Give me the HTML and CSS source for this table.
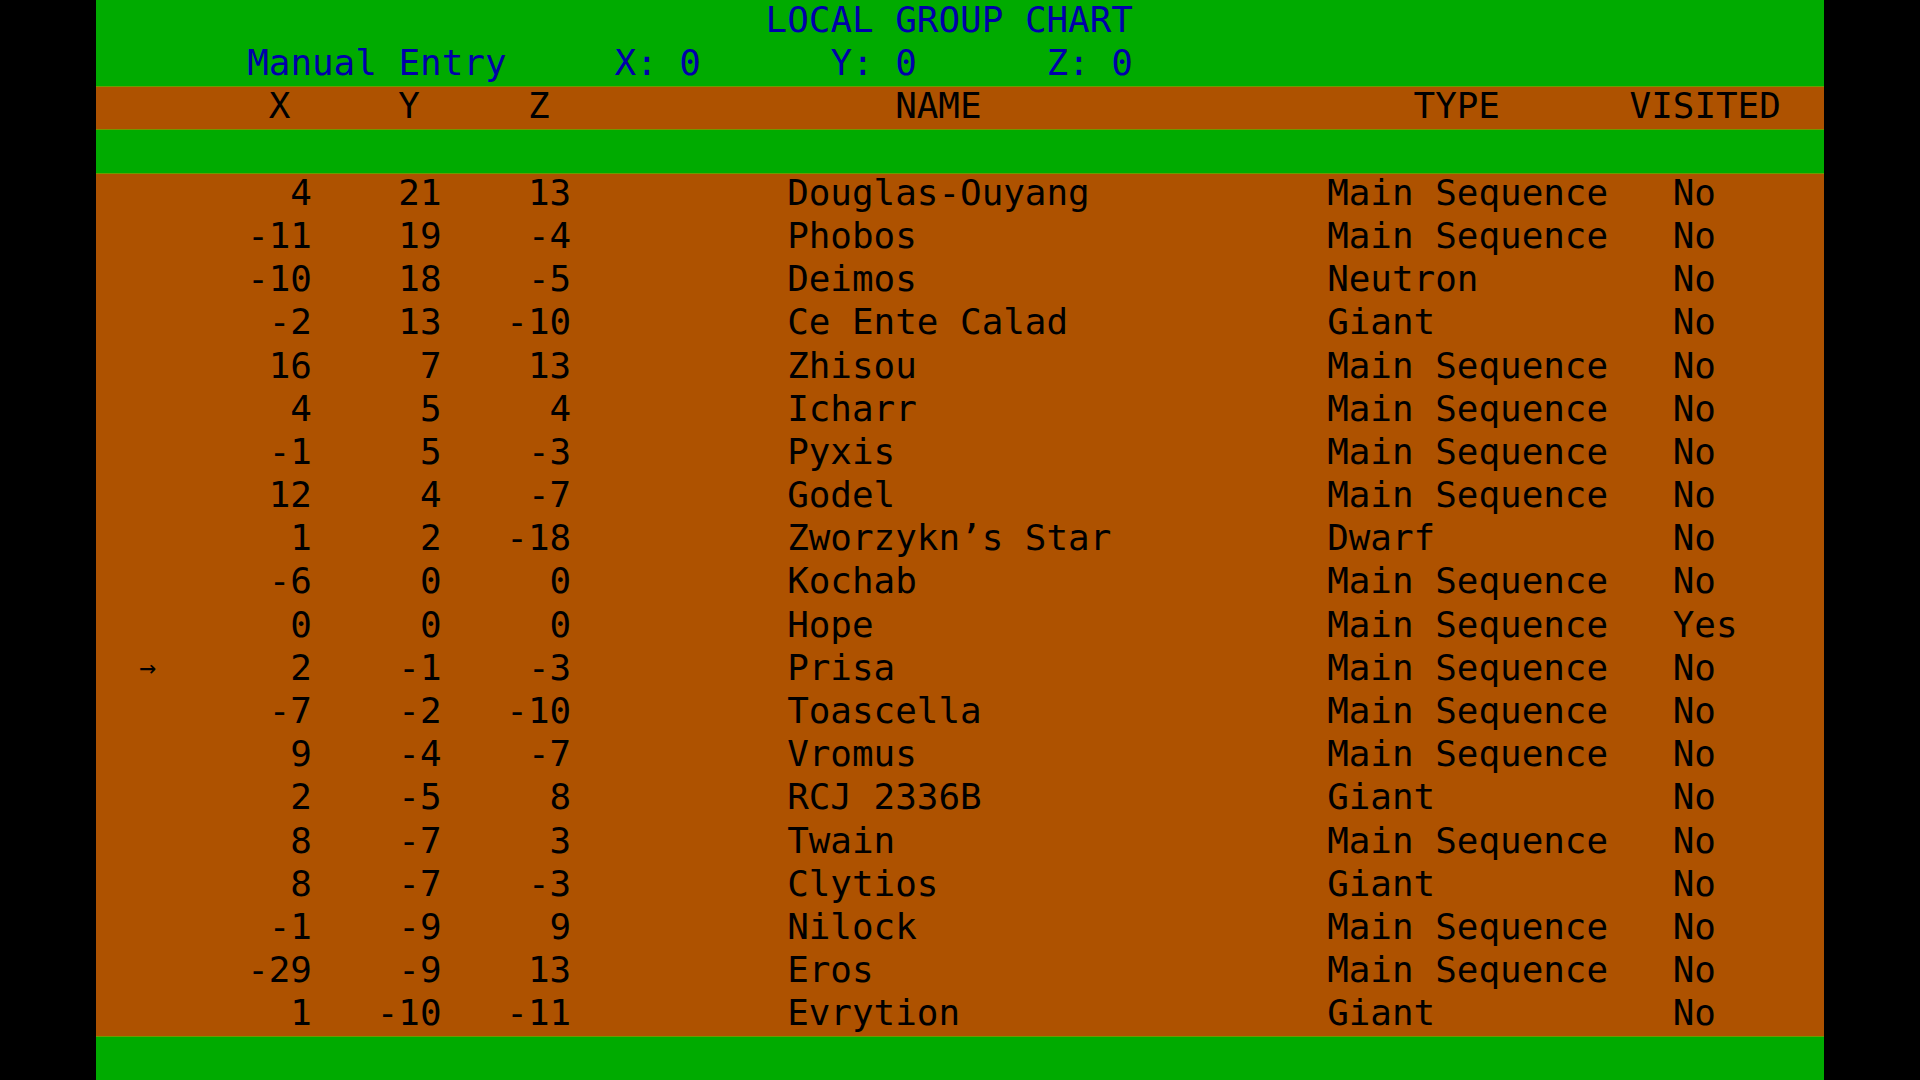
FILE: index.html
```html
<!DOCTYPE html>
<html lang="en">
<head>
<meta charset="utf-8">
<title>Local Group Chart</title>
<link rel="stylesheet" href="styles.css">
</head>
<body>
<main class="screen">
  <header class="top">
    <div class="line title">LOCAL GROUP CHART</div>
    <div class="line coords">
      <span class="pad7"></span>
      <span>Manual Entry</span>
      <span>X: 0</span>
      <span>Y: 0</span>
      <span>Z: 0</span>
    </div>
  </header>

  <div class="line grid heads">
    <span></span><span></span>
    <span class="num hnum">X</span>
    <span class="num hnum">Y</span>
    <span class="num hnum">Z</span>
    <span></span>
    <span class="hname">NAME</span>
    <span class="htype">TYPE</span>
    <span class="hvis">VISITED</span>
  </div>

  <div class="line spacer"></div>

  <ul class="list">
    <li class="line grid"><span></span><span class="mark"></span><span class="num">4</span><span class="num">21</span><span class="num">13</span><span></span><span>Douglas-Ouyang</span><span>Main Sequence</span><span>No</span></li>
    <li class="line grid"><span></span><span class="mark"></span><span class="num">-11</span><span class="num">19</span><span class="num">-4</span><span></span><span>Phobos</span><span>Main Sequence</span><span>No</span></li>
    <li class="line grid"><span></span><span class="mark"></span><span class="num">-10</span><span class="num">18</span><span class="num">-5</span><span></span><span>Deimos</span><span>Neutron</span><span>No</span></li>
    <li class="line grid"><span></span><span class="mark"></span><span class="num">-2</span><span class="num">13</span><span class="num">-10</span><span></span><span>Ce Ente Calad</span><span>Giant</span><span>No</span></li>
    <li class="line grid"><span></span><span class="mark"></span><span class="num">16</span><span class="num">7</span><span class="num">13</span><span></span><span>Zhisou</span><span>Main Sequence</span><span>No</span></li>
    <li class="line grid"><span></span><span class="mark"></span><span class="num">4</span><span class="num">5</span><span class="num">4</span><span></span><span>Icharr</span><span>Main Sequence</span><span>No</span></li>
    <li class="line grid"><span></span><span class="mark"></span><span class="num">-1</span><span class="num">5</span><span class="num">-3</span><span></span><span>Pyxis</span><span>Main Sequence</span><span>No</span></li>
    <li class="line grid"><span></span><span class="mark"></span><span class="num">12</span><span class="num">4</span><span class="num">-7</span><span></span><span>Godel</span><span>Main Sequence</span><span>No</span></li>
    <li class="line grid"><span></span><span class="mark"></span><span class="num">1</span><span class="num">2</span><span class="num">-18</span><span></span><span>Zworzykn’s Star</span><span>Dwarf</span><span>No</span></li>
    <li class="line grid"><span></span><span class="mark"></span><span class="num">-6</span><span class="num">0</span><span class="num">0</span><span></span><span>Kochab</span><span>Main Sequence</span><span>No</span></li>
    <li class="line grid"><span></span><span class="mark"></span><span class="num">0</span><span class="num">0</span><span class="num">0</span><span></span><span>Hope</span><span>Main Sequence</span><span>Yes</span></li>
    <li class="line grid"><span></span><span class="mark">→</span><span class="num">2</span><span class="num">-1</span><span class="num">-3</span><span></span><span>Prisa</span><span>Main Sequence</span><span>No</span></li>
    <li class="line grid"><span></span><span class="mark"></span><span class="num">-7</span><span class="num">-2</span><span class="num">-10</span><span></span><span>Toascella</span><span>Main Sequence</span><span>No</span></li>
    <li class="line grid"><span></span><span class="mark"></span><span class="num">9</span><span class="num">-4</span><span class="num">-7</span><span></span><span>Vromus</span><span>Main Sequence</span><span>No</span></li>
    <li class="line grid"><span></span><span class="mark"></span><span class="num">2</span><span class="num">-5</span><span class="num">8</span><span></span><span>RCJ 2336B</span><span>Giant</span><span>No</span></li>
    <li class="line grid"><span></span><span class="mark"></span><span class="num">8</span><span class="num">-7</span><span class="num">3</span><span></span><span>Twain</span><span>Main Sequence</span><span>No</span></li>
    <li class="line grid"><span></span><span class="mark"></span><span class="num">8</span><span class="num">-7</span><span class="num">-3</span><span></span><span>Clytios</span><span>Giant</span><span>No</span></li>
    <li class="line grid"><span></span><span class="mark"></span><span class="num">-1</span><span class="num">-9</span><span class="num">9</span><span></span><span>Nilock</span><span>Main Sequence</span><span>No</span></li>
    <li class="line grid"><span></span><span class="mark"></span><span class="num">-29</span><span class="num">-9</span><span class="num">13</span><span></span><span>Eros</span><span>Main Sequence</span><span>No</span></li>
    <li class="line grid"><span></span><span class="mark"></span><span class="num">1</span><span class="num">-10</span><span class="num">-11</span><span></span><span>Evrytion</span><span>Giant</span><span>No</span></li>
  </ul>

  <div class="line spacer"></div>
</main>
</body>
</html>
```

FILE: styles.css
```css
:root {
  --c: 21.6px;
  --row: 43.2px;
  --green: #00ab00;
  --brown: #ae5200;
  --blue: #0000aa;
  --edge: #6f9a00;
}

html, body {
  margin: 0;
  padding: 0;
  background: #000;
}

body {
  width: 1920px;
  height: 1080px;
  overflow: hidden;
}

.screen {
  display: block;
  width: calc(var(--c) * 80);
  height: calc(var(--row) * 25);
  margin: 0 auto;
  background: var(--green);
  font-family: "DejaVu Sans Mono", "Liberation Mono", monospace;
  font-size: 35.9px;
  color: #000;
  white-space: nowrap;
}

.line {
  height: var(--row);
  line-height: 39.2px;
  box-sizing: border-box;
}

.top {
  color: var(--blue);
}

.title {
  padding-left: calc(var(--c) * 31);
}

.coords {
  display: grid;
  grid-template-columns:
    calc(var(--c) * 7) calc(var(--c) * 17) calc(var(--c) * 10)
    calc(var(--c) * 10) 1fr;
}

.grid {
  display: grid;
  grid-template-columns:
    calc(var(--c) * 2) calc(var(--c) * 1) calc(var(--c) * 7)
    calc(var(--c) * 6) calc(var(--c) * 6) calc(var(--c) * 10)
    calc(var(--c) * 25) calc(var(--c) * 16) calc(var(--c) * 7);
}

.heads {
  background: var(--brown);
  box-shadow: inset 0 1px 0 var(--edge), inset 0 -1px 0 var(--edge);
}

.num {
  text-align: right;
}

.hnum {
  padding-right: var(--c);
}

.hname {
  padding-left: calc(var(--c) * 5);
}

.htype {
  padding-left: calc(var(--c) * 4);
}

.hvis {
  margin-left: calc(var(--c) * -2);
}

.list {
  list-style: none;
  margin: 0;
  padding: 0;
  background: var(--brown);
  box-shadow: inset 0 1px 0 var(--edge), inset 0 -1px 0 var(--edge);
}

.mark {
  font-size: 28px;
  line-height: 39.2px;
}
```
